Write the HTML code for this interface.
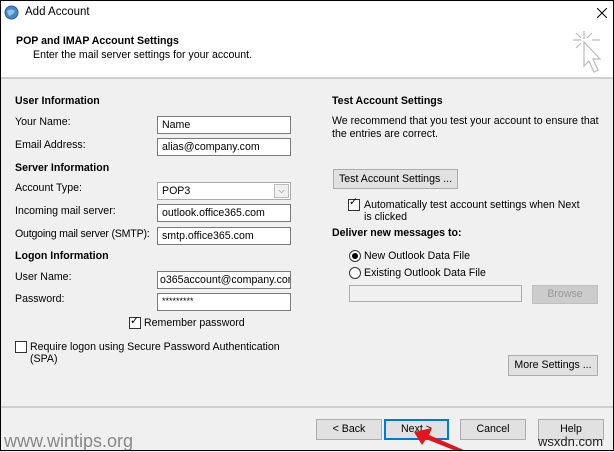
<!DOCTYPE html>
<html><head><style>
*{box-sizing:border-box;margin:0;padding:0}
body{width:614px;height:451px;overflow:hidden;font-family:"Liberation Sans",sans-serif;font-size:10.6px;color:#000;background:#f0f0f0;position:relative}
.a{position:absolute;white-space:nowrap}
.frame{position:absolute;left:0;top:0;width:614px;height:451px;border:1px solid #000;pointer-events:none}
.hdr{position:absolute;left:0;top:0;width:614px;height:79px;background:#fff;border-bottom:2px solid #d0d0d0}
.in{position:absolute;background:#fff;border:1px solid #7a7a7a;height:18px;padding:2px 4px;font-size:10.6px;overflow:hidden;white-space:nowrap}
.btn{position:absolute;background:#e1e1e1;border:1px solid #adadad;height:21px;text-align:center;line-height:19px;font-size:10.6px}
.cb{position:absolute;width:12px;height:12px;border:1px solid #333;background:#fff}
.rd{position:absolute;width:12px;height:12px;border:1px solid #333;border-radius:50%;background:#fff}
</style></head><body>
<div class="hdr"></div>
<svg class="a" style="left:4px;top:5px" width="15" height="15"><circle cx="7.5" cy="7.5" r="6.5" fill="#4a86c5" stroke="#2b5f99"/><path d="M3 6 Q7 3 11 6 Q9 10 5 11Z" fill="#8fc0e8"/></svg>
<div class="a" style="left:25px;top:6px;font-size:11.5px">Add Account</div>
<svg class="a" style="left:597px;top:8px" width="10" height="10"><path d="M0 0L10 10M10 0L0 10" stroke="#000" stroke-width="1"/></svg>
<div class="a" style="left:16px;top:35px;font-weight:bold">POP and IMAP Account Settings</div>
<div class="a" style="left:33px;top:49px">Enter the mail server settings for your account.</div>
<svg class="a" style="left:570px;top:30px" width="34" height="48"><g stroke="#bbb" stroke-width="1.2" fill="none"><path d="M14 1v8M3 10h8M22 10h8M6 3l5 5M22 3l-5 5M6 18l5-5"/><path d="M14 12v24l5-5 5 11 4-2-5-11h7z" fill="#fff"/></g></svg>

<div class="a" style="left:15px;top:95px;font-weight:bold">User Information</div>
<div class="a" style="left:15px;top:116px">Your Name:</div>
<div class="in" style="left:157px;top:116px;width:134px">Name</div>
<div class="a" style="left:15px;top:139px">Email Address:</div>
<div class="in" style="left:157px;top:138px;width:134px">alias@company.com</div>
<div class="a" style="left:15px;top:162px;font-weight:bold">Server Information</div>
<div class="a" style="left:15px;top:182px">Account Type:</div>
<div class="in" style="left:157px;top:182px;width:134px;border-color:#aaa;background:#fff">POP3</div>
<div class="a" style="left:274px;top:184px;width:15px;height:14px;border:1px solid #bbb;background:#f0f0f0;font-size:8px;text-align:center;line-height:12px;color:#555">⌵</div>
<div class="a" style="left:15px;top:205px">Incoming mail server:</div>
<div class="in" style="left:157px;top:204px;width:134px">outlook.office365.com</div>
<div class="a" style="left:15px;top:228px;letter-spacing:-0.2px">Outgoing mail server (SMTP):</div>
<div class="in" style="left:157px;top:227px;width:134px">smtp.office365.com</div>
<div class="a" style="left:15px;top:250px;font-weight:bold">Logon Information</div>
<div class="a" style="left:15px;top:271px">User Name:</div>
<div class="in" style="left:157px;top:271px;width:134px;padding-left:2px">o365account@company.com</div>
<div class="a" style="left:15px;top:293px">Password:</div>
<div class="in" style="left:157px;top:293px;width:134px;font-size:9px">*********</div>
<div class="cb" style="left:129px;top:317px"></div><div class="a" style="left:130px;top:314px;font-size:11px">✓</div>
<div class="a" style="left:144px;top:317px">Remember password</div>
<div class="cb" style="left:15px;top:341px"></div>
<div class="a" style="left:30px;top:341px">Require logon using Secure Password Authentication</div>
<div class="a" style="left:30px;top:353px">(SPA)</div>

<div class="a" style="left:332px;top:95px;font-weight:bold">Test Account Settings</div>
<div class="a" style="left:332px;top:115px">We recommend that you test your account to ensure that</div>
<div class="a" style="left:332px;top:128px">the entries are correct.</div>
<div class="btn" style="left:333px;top:169px;width:125px;height:20px">Test Account Settings ...</div>
<div class="cb" style="left:348px;top:199px"></div><div class="a" style="left:349px;top:196px">✓</div>
<div class="a" style="left:364px;top:199px">Automatically test account settings when Next</div>
<div class="a" style="left:364px;top:211px">is clicked</div>
<div class="a" style="left:332px;top:227px;font-weight:bold">Deliver new messages to:</div>
<div class="rd" style="left:349px;top:250px"></div><div class="a" style="left:352px;top:253px;width:6px;height:6px;border-radius:50%;background:#000"></div>
<div class="a" style="left:364px;top:250px">New Outlook Data File</div>
<div class="rd" style="left:349px;top:267px"></div>
<div class="a" style="left:364px;top:267px">Existing Outlook Data File</div>
<div class="a" style="left:349px;top:285px;width:173px;height:17px;border:1px solid #adadad;background:#f0f0f0"></div>
<div class="btn" style="left:532px;top:285px;width:66px;height:19px;line-height:17px;color:#999;background:#ccc;border-color:#bfbfbf">Browse</div>
<div class="btn" style="left:508px;top:355px;width:90px">More Settings ...</div>

<div class="a" style="left:0;top:406px;width:614px;height:2px;background:#d0d0d0"></div>
<div class="btn" style="left:316px;top:419px;width:66px">&lt; Back</div>
<div class="btn" style="left:384px;top:419px;width:65px;border:2px solid #0078d7;line-height:17px">Next &gt;</div>
<div class="btn" style="left:460px;top:419px;width:66px">Cancel</div>
<div class="btn" style="left:538px;top:419px;width:66px">Help</div>
<div class="a" style="left:4px;top:431px;font-size:18px;color:#888">www.wintips.org</div>
<div class="a" style="left:538px;top:434px;font-size:13px;color:#222">wsxdn.com</div>
<svg class="a" style="left:400px;top:422px" width="70" height="29"><path d="M14 10 L32 6 L29 13 L66 29 L56 29 L26 17 L22 23Z" fill="#e3141b"/></svg>
<div class="frame"></div>
</body></html>
